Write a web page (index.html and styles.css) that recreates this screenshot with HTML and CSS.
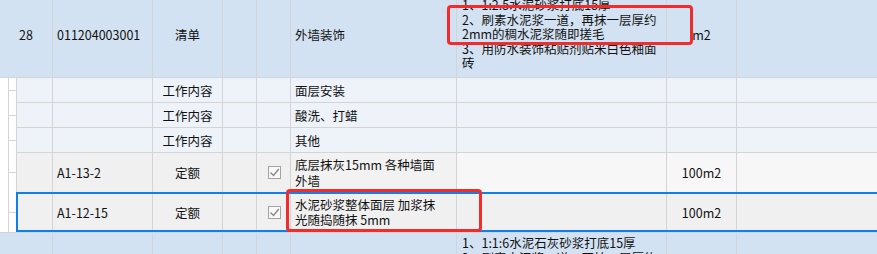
FILE: index.html
```html
<!DOCTYPE html>
<html lang="zh-CN">
<head>
<meta charset="utf-8">
<title>清单</title>
<link rel="stylesheet" href="styles.css">
</head>
<body>
<div class="sheet">
  <div class="row parent tall">
    <div class="c c0 center">28</div>
    <div class="c c1">011204003001</div>
    <div class="c c2 center">清单</div>
    <div class="c c3"></div>
    <div class="c c4"></div>
    <div class="c c5">外墙装饰</div>
    <div class="c c6 desc">1、1:2.5水泥砂浆打底15厚<br>2、刷素水泥浆一道，再抹一层厚约<br>2mm的稠水泥浆随即搓毛<br>3、用防水装饰粘贴剂贴米白色釉面<br>砖</div>
    <div class="c c7 center">m2</div>
    <div class="c c8"></div>
  </div>

  <div class="row child work">
    <div class="gutter"><span class="tick"></span><span class="tail"></span></div>
    <div class="c c0 first"></div>
    <div class="c c1"></div>
    <div class="c c2 center">工作内容</div>
    <div class="c c3"></div>
    <div class="c c4"></div>
    <div class="c c5">面层安装</div>
    <div class="c c6"></div>
    <div class="c c7"></div>
    <div class="c c8"></div>
  </div>

  <div class="row child work">
    <div class="gutter"><span class="tick"></span><span class="tail"></span></div>
    <div class="c c0 first"></div>
    <div class="c c1"></div>
    <div class="c c2 center">工作内容</div>
    <div class="c c3"></div>
    <div class="c c4"></div>
    <div class="c c5">酸洗、打蜡</div>
    <div class="c c6"></div>
    <div class="c c7"></div>
    <div class="c c8"></div>
  </div>

  <div class="row child work">
    <div class="gutter"><span class="tick"></span><span class="tail"></span></div>
    <div class="c c0 first"></div>
    <div class="c c1"></div>
    <div class="c c2 center">工作内容</div>
    <div class="c c3"></div>
    <div class="c c4"></div>
    <div class="c c5">其他</div>
    <div class="c c6"></div>
    <div class="c c7"></div>
    <div class="c c8"></div>
  </div>

  <div class="row child quota q1">
    <div class="gutter"><span class="tick"></span><span class="tail"></span></div>
    <div class="c c0 first"></div>
    <div class="c c1">A1-13-2</div>
    <div class="c c2 center">定额</div>
    <div class="c c3"></div>
    <div class="c c4 center">
      <svg class="chk" width="13" height="13" viewBox="0 0 13 13"><rect x="0.5" y="0.5" width="12" height="12" fill="#f9f9f9" stroke="#a3a3a3"/><polyline points="2.5,6.5 5.5,9.5 10.8,3" fill="none" stroke="#8a8a8a" stroke-width="1.4"/></svg>
    </div>
    <div class="c c5 lines">底层抹灰15mm 各种墙面<br>外墙</div>
    <div class="c c6 light"></div>
    <div class="c c7 center light">100m2</div>
    <div class="c c8 light"></div>
  </div>

  <div class="row child quota sel">
    <div class="gutter"><span class="tick"></span><span class="tail"></span></div>
    <div class="c c0 first"></div>
    <div class="c c1">A1-12-15</div>
    <div class="c c2 center">定额</div>
    <div class="c c3"></div>
    <div class="c c4 center">
      <svg class="chk" width="13" height="13" viewBox="0 0 13 13"><rect x="0.5" y="0.5" width="12" height="12" fill="#f9f9f9" stroke="#a3a3a3"/><polyline points="2.5,6.5 5.5,9.5 10.8,3" fill="none" stroke="#8a8a8a" stroke-width="1.4"/></svg>
    </div>
    <div class="c c5 lines">水泥砂浆整体面层 加浆抹<br>光随捣随抹 5mm</div>
    <div class="c c6"></div>
    <div class="c c7 center">100m2</div>
    <div class="c c8"></div>
  </div>

  <div class="row parent last">
    <div class="c c0"></div>
    <div class="c c1"></div>
    <div class="c c2"></div>
    <div class="c c3"></div>
    <div class="c c4"></div>
    <div class="c c5"></div>
    <div class="c c6 desc top">1、1:1:6水泥石灰砂浆打底15厚<br>2、刷素水泥浆一道，再抹一层厚约</div>
    <div class="c c7"></div>
    <div class="c c8"></div>
  </div>
</div>

<div class="mark mark1"></div>
<div class="mark mark2"></div>
</body>
</html>
```

FILE: styles.css
```css
html, body {
  margin: 0;
  padding: 0;
  background: #ffffff;
}
body {
  position: relative;
  width: 877px;
  height: 254px;
  overflow: hidden;
  font-family: "Noto Sans CJK SC", "Liberation Sans", sans-serif;
  font-size: 12.5px;
  color: #111;
}
.sheet {
  margin-top: -8px;
  display: flex;
  flex-direction: column;
}
.row {
  display: grid;
  grid-template-columns: 16px 37px 100px 70px 34px 34px 166px 210px 70px 1fr;
  position: relative;
}
.c {
  box-sizing: border-box;
  border-right: 1px solid #d4d4d4;
  border-bottom: 1px solid #d4d4d4;
  display: flex;
  align-items: center;
  padding-left: 4px;
  white-space: nowrap;
  line-height: 15px;
  min-width: 0;
  overflow: hidden;
}
.c.center {
  justify-content: center;
  padding-left: 0;
}
.c6 { padding-left: 5px; }
.c8 { border-right: none; }

.parent .c { background: #d3e2f2; }
.parent .c0 { grid-column: 1 / span 2; }
.tall { height: 86px; }
.desc { line-height: 14.5px; }

.last { height: 60px; }
.last .c { border-bottom: none; border-top: 1px solid #d4d4d4; }
.top { align-items: flex-start; padding-top: 3px; }

.gutter {
  background: #ffffff;
  display: flex;
  flex-direction: column;
}
.tick {
  height: 50%;
  margin-left: 8px;
  border-left: 1px solid #d4d4d4;
  border-bottom: 1px solid #d4d4d4;
  box-sizing: border-box;
}
.tail {
  flex: 1;
  margin-left: 8px;
  border-left: 1px solid #d4d4d4;
}
.first { border-left: 1px solid #d4d4d4; }

.work { height: 25px; }
.work .c { background: #eef3f9; }

.quota .c { background: #f0f0f0; }
.quota .c5 { background: #f2f2f2; }
.quota .c.light { background: #f7f7f7; }
.q1 { height: 40px; }
.sel { height: 39px; }
.sel .c, .sel .c5 { background: #f0f0f0; }
.sel::after {
  content: "";
  position: absolute;
  left: 16px;
  right: -4px;
  top: -1px;
  bottom: 0;
  border: 2px solid #0d80ee;
  pointer-events: none;
}
.lines { line-height: 15.5px; }
.chk { display: block; margin-left: 1px; }

.mark {
  position: absolute;
  box-sizing: border-box;
  border: 3px solid #f42b2b;
  border-radius: 4px;
}
.mark1 {
  left: 447px;
  top: 5px;
  width: 246px;
  height: 40px;
}
.mark2 {
  left: 286px;
  top: 189px;
  width: 196px;
  height: 43px;
}
```
